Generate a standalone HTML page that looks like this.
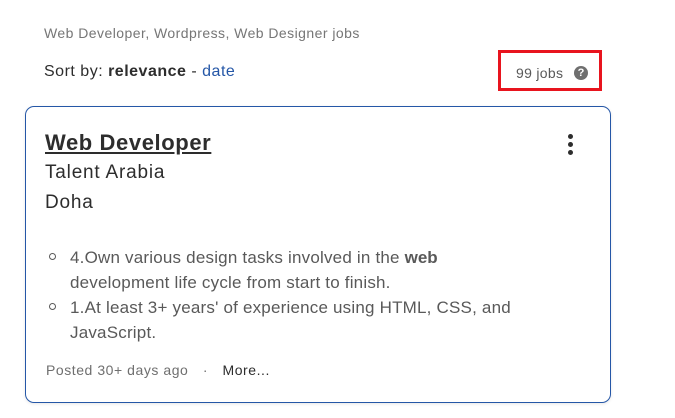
<!DOCTYPE html>
<html><head><style>
body{margin:0;width:675px;height:418px;background:#fff;font-family:"Liberation Sans",sans-serif;position:relative;overflow:hidden;color:#2d2d2d}
.a{position:absolute;white-space:nowrap}
</style></head><body>
<div class="a" style="left:44px;top:25px;font-size:14px;color:#767676;letter-spacing:0.45px">Web Developer, Wordpress, Web Designer jobs</div>
<div class="a" style="left:44px;top:63px;font-size:16px;color:#2d2d2d;letter-spacing:0.5px">Sort by: <b>relevance</b> - <span style="color:#2557a7">date</span></div>
<div class="a" style="left:498px;top:50px;width:98px;height:35px;border:3px solid #e8141e"></div>
<div class="a" style="left:516px;top:65px;font-size:14px;color:#595959;letter-spacing:0.3px">99 jobs</div>
<div class="a" style="left:574px;top:66px;width:14px;height:14px;border-radius:50%;background:#6f6f6f;color:#fff;font-size:11px;font-weight:bold;text-align:center;line-height:14px">?</div>
<div class="a" style="left:25px;top:106px;width:584px;height:295px;border:1px solid #2557a7;border-radius:9px;box-shadow:0 1px 3px rgba(0,0,0,0.1)"></div>
<div class="a" style="left:45px;top:130px;font-size:22px;font-weight:bold;text-decoration:underline;color:#2d2d2d;letter-spacing:0.6px">Web Developer</div>
<div class="a" style="left:568px;top:134px;width:5px;height:5px;border-radius:50%;background:#2d2d2d"></div>
<div class="a" style="left:568px;top:142px;width:5px;height:5px;border-radius:50%;background:#2d2d2d"></div>
<div class="a" style="left:568px;top:150px;width:5px;height:5px;border-radius:50%;background:#2d2d2d"></div>
<div class="a" style="left:45px;top:162px;font-size:19px;letter-spacing:0.8px">Talent Arabia</div>
<div class="a" style="left:45px;top:192px;font-size:19px;letter-spacing:0.8px">Doha</div>
<div class="a" style="left:70px;top:245px;font-size:17px;line-height:25px;color:#595959;letter-spacing:0.2px">
4.Own various design tasks involved in the <b style="letter-spacing:0">web</b><br>development life cycle from start to finish.<br>1.At least 3+ years' of experience using HTML, CSS, and<br>JavaScript.</div>
<div class="a" style="left:49px;top:253px;width:5px;height:5px;border:1px solid #595959;border-radius:50%"></div>
<div class="a" style="left:49px;top:303px;width:5px;height:5px;border:1px solid #595959;border-radius:50%"></div>
<div class="a" style="left:46px;top:362px;font-size:14px;color:#6f6f6f;letter-spacing:0.55px">Posted 30+ days ago <span style="margin:0 10px">·</span> <span style="color:#2d2d2d">More...</span></div>
</body></html>
